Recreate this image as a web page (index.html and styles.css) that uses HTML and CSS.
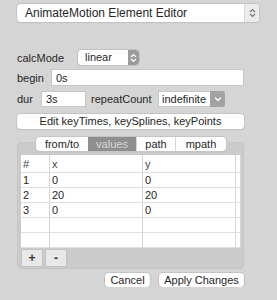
FILE: index.html
```html
<!DOCTYPE html>
<html lang="en">
<head>
  <meta charset="UTF-8" />
  <title>AnimateMotion Element Editor</title>
  <link rel="stylesheet" href="styles.css">
</head>
<body>
  <div class="panel">
    <div class="popup popup-wide">
      <span class="popup-text">AnimateMotion Element Editor</span>
      <span class="popup-arrow light">
        <svg width="7" height="10" viewBox="0 0 7 10"><path d="M1 4 L3.5 1.5 L6 4 M1 6 L3.5 8.5 L6 6" fill="none" stroke="#777" stroke-width="1.2"/></svg>
      </span>
    </div>

    <div class="row row-calc">
      <span class="label w-calc">calcMode</span>
      <div class="popup popup-calc">
        <span class="popup-text">linear</span>
        <span class="popup-arrow dark">
          <svg width="7" height="10" viewBox="0 0 7 10"><path d="M1 4 L3.5 1.5 L6 4 M1 6 L3.5 8.5 L6 6" fill="none" stroke="#fff" stroke-width="1.2"/></svg>
        </span>
      </div>
    </div>

    <div class="row row-begin">
      <span class="label w-begin">begin</span>
      <input class="field field-begin" type="text" value="0s">
    </div>

    <div class="row row-dur">
      <span class="label w-dur">dur</span>
      <input class="field field-dur" type="text" value="3s">
      <span class="label w-repeat">repeatCount</span>
      <div class="combo">
        <span class="combo-text">indefinite</span>
        <span class="combo-arrow">
          <svg width="8" height="6" viewBox="0 0 8 6"><path d="M1 1.5 L4 4.5 L7 1.5" fill="none" stroke="#fff" stroke-width="1.3"/></svg>
        </span>
      </div>
    </div>

    <button class="btn btn-wide">Edit keyTimes, keySplines, keyPoints</button>

    <div class="group">
      <div class="tabs">
        <span class="tab t-fromto">from/to</span>
        <span class="tab t-values active">values</span>
        <span class="tab t-path">path</span>
        <span class="tab t-mpath">mpath</span>
      </div>
      <table class="grid">
        <tr class="head"><td class="c-num">#</td><td class="c-x">x</td><td class="c-y">y</td><td class="c-end"></td></tr>
        <tr><td>1</td><td>0</td><td>0</td><td></td></tr>
        <tr><td>2</td><td>20</td><td>20</td><td></td></tr>
        <tr><td>3</td><td>0</td><td>0</td><td></td></tr>
        <tr><td></td><td></td><td></td><td></td></tr>
        <tr><td></td><td></td><td></td><td></td></tr>
      </table>
      <div class="pm">
        <button class="pm-btn">+</button>
        <button class="pm-btn">-</button>
      </div>
    </div>

    <div class="actions">
      <button class="btn btn-cancel">Cancel</button>
      <button class="btn btn-apply">Apply Changes</button>
    </div>
  </div>
</body>
</html>
```

FILE: styles.css
```css
body {
  margin: 0;
  background-color: #d5d5d5;
  font-family: 'Liberation Sans', Arial, sans-serif;
  font-size: 11px;
  color: #262626;
}

.panel {
  width: 227px;
  padding: 4px 0 0 17px;
  display: flex;
  flex-direction: column;
}

.popup {
  display: flex;
  align-items: stretch;
  background-color: #fff;
  border-radius: 4px;
  box-shadow: 0 0 0 1px #c2c2c2, 0 1px 1px rgba(0,0,0,0.15);
  box-sizing: border-box;
  overflow: hidden;
}

.popup-wide {
  width: 242px;
  height: 18px;
  font-size: 12px;
}

.popup-text {
  flex: 1;
  padding-left: 8px;
  line-height: 18px;
}

.popup-arrow {
  width: 14px;
  display: flex;
  align-items: center;
  justify-content: center;
}

.popup-arrow.light {
  background-color: #ececec;
  border-left: 1px solid #d8d8d8;
}

.popup-arrow.dark {
  width: 11px;
  background-color: #9b9b9b;
}

.row {
  display: flex;
  align-items: center;
}

.row-calc {
  margin-top: 28px;
  height: 15px;
}

.popup-calc {
  width: 61px;
  height: 15px;
}

.popup-calc .popup-text {
  line-height: 15px;
  padding-left: 7px;
}

.label {
  flex: none;
}

.w-calc { width: 61px; }
.w-begin { width: 34px; }
.w-dur { width: 24px; }
.w-repeat { width: 67px; margin-left: 5px; }

.row-begin {
  margin-top: 4px;
  height: 17px;
}

.field {
  box-sizing: border-box;
  border: 1px solid #c6c6c6;
  background-color: #fff;
  font-family: inherit;
  font-size: 11px;
  color: #262626;
  padding: 0 4px;
  margin: 0;
  outline: none;
}

.field-begin {
  width: 193px;
  height: 17px;
}

.row-dur {
  margin-top: 5px;
  height: 16px;
}

.field-dur {
  width: 45px;
  height: 16px;
}

.combo {
  display: flex;
  width: 67px;
  height: 16px;
  box-sizing: border-box;
}

.combo-text {
  flex: 1;
  background-color: #fff;
  border: 1px solid #c6c6c6;
  border-right: none;
  padding-left: 3px;
  line-height: 14px;
}

.combo-arrow {
  width: 15px;
  background-color: #a2a2a2;
  border-radius: 0 3px 3px 0;
  display: flex;
  align-items: center;
  justify-content: center;
}

.btn {
  font-family: inherit;
  font-size: 11px;
  color: #262626;
  background-color: #fff;
  border: none;
  border-radius: 4px;
  box-shadow: 0 0 0 1px #c4c4c4, 0 1px 1px rgba(0,0,0,0.15);
  padding: 0;
  margin: 0;
  height: 15px;
  line-height: 15px;
}

.btn-wide {
  width: 227px;
  margin-top: 7px;
}

.group {
  position: relative;
  margin-top: 13px;
  width: 227px;
  height: 127px;
  box-sizing: border-box;
  background-color: #cbcbcb;
  border: 1px solid #c5c5c5;
  border-radius: 4px;
  padding: 12px 3px 0 3px;
}

.tabs {
  position: absolute;
  top: -6px;
  left: 18px;
  display: flex;
  height: 14px;
  border-radius: 4px;
  overflow: hidden;
  box-shadow: 0 0 0 1px #c4c4c4, 0 1px 1px rgba(0,0,0,0.15);
  background-color: #fff;
}

.tab {
  text-align: center;
  line-height: 14px;
  border-left: 1px solid #d6d6d6;
}

.tab:first-child {
  border-left: none;
}

.t-fromto { width: 52px; }
.t-values { width: 48px; }
.t-path { width: 38px; }
.t-mpath { width: 50px; }

.tab.active {
  background-color: #8f8f8f;
  color: #d8d8d8;
  border-left: none;
}

.grid {
  width: 220px;
  border-collapse: collapse;
  background-color: #fff;
  table-layout: fixed;
}

.grid td {
  height: 14px;
  padding: 0 0 0 2px;
  border-right: 1px solid #d4d4d4;
  border-bottom: 1px solid #e0e0e0;
  line-height: 14px;
  overflow: hidden;
}

.grid tr.head td {
  height: 17px;
  color: #444;
}

.grid .c-num { width: 26px; }
.grid .c-x { width: 90px; }
.grid .c-y { width: 90px; }
.grid .c-end { width: 2px; }

.pm {
  display: flex;
  gap: 2px;
  margin-top: 1px;
}

.pm-btn {
  width: 22px;
  height: 18px;
  padding: 0;
  font-family: inherit;
  font-size: 12px;
  font-weight: bold;
  color: #333;
  background-color: #e8e8e8;
  border: 1px solid #c2c2c2;
}

.actions {
  display: flex;
  justify-content: flex-end;
  gap: 9px;
  margin-top: 4px;
}

.btn-cancel {
  width: 45px;
  height: 14px;
  line-height: 14px;
}

.btn-apply {
  width: 85px;
  height: 14px;
  line-height: 14px;
}
```
